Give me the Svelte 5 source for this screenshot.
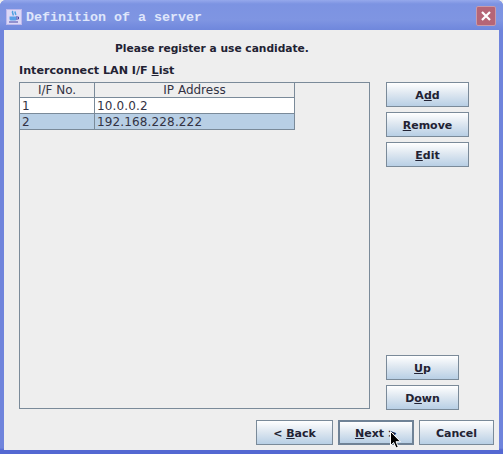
<script>
  const rows = [
    { no: '1', ip: '10.0.0.2', selected: false },
    { no: '2', ip: '192.168.228.222', selected: true }
  ];
</script>

<div class="window">
  <header class="titlebar">
    <svg class="app-icon" width="16" height="16" viewBox="0 0 16 16">
      <rect x="0.5" y="0.5" width="15" height="15" fill="#dcd8f6" stroke="#bdb8ec"/>
      <path d="M7 2c-2 1.500 1 2.500 0 4.500M9.500 2.500c-1.500 1.500 1 2 0 3.500" fill="none" stroke="#4aa0e0" stroke-width="1.500"/>
      <path d="M3.500 7.500h7v2.500q0 1.500-1.500 1.500H5q-1.500 0-1.500-1.500z" fill="#5aa0e8"/>
      <path d="M3 13h9M10 8h2.500v2H10" fill="none" stroke="#4848a8" stroke-width="1"/>
    </svg>
    <span class="title">Definition of a server</span>
    <span class="close"><svg width="12" height="12" viewBox="0 0 12 12"><path d="M2 2l8 8M10 2l-8 8" stroke="#fff" stroke-width="2.200"/></svg></span>
  </header>

  <main class="content">
    <p class="message">Please register a use candidate.</p>
    <div class="body">
      <section class="list-col">
        <div class="list-label">Interconnect LAN I/F <u>L</u>ist</div>
        <div class="scroll">
          <div class="tbl">
            <div class="row head">
              <div class="c1">I/F No.</div>
              <div class="c2">IP Address</div>
            </div>
            {#each rows as r}
              <div class="row" class:selected={r.selected}>
                <div class="c1">{r.no}</div>
                <div class="c2">{r.ip}</div>
              </div>
            {/each}
          </div>
        </div>
      </section>
      <aside class="side">
        <div class="group">
          <button class="wide">A<u>d</u>d</button>
          <button class="wide"><u>R</u>emove</button>
          <button class="wide"><u>E</u>dit</button>
        </div>
        <div class="group">
          <button class="narrow"><u>U</u>p</button>
          <button class="narrow">D<u>o</u>wn</button>
        </div>
      </aside>
    </div>
    <footer class="nav">
      <button class="back">&lt; <u>B</u>ack</button>
      <button class="next"><u>N</u>ext &gt;</button>
      <button class="cancel">Cancel</button>
    </footer>
  </main>

  <svg class="cursor" width="12" height="19" viewBox="0 0 12 19">
    <path d="M0.500 0.500v14l3.200-3 2.300 5.500 2.300-1-2.300-5.300h4.500z" fill="#000" stroke="#fff" stroke-width="1"/>
  </svg>
</div>

<style>
  :global(body) { margin: 0; background: #eeeeee; }
  .window {
    position: relative;
    width: 503px;
    height: 454px;
    box-sizing: border-box;
    display: flex;
    flex-direction: column;
    background: linear-gradient(#6f84dc 0, #6f84dc 448px, #5468d2 450px, #5468d2 100%);
    border-radius: 6px 6px 0 0;
    overflow: hidden;
    font-family: "DejaVu Sans", sans-serif;
    color: #222233;
  }
  .titlebar {
    height: 30px;
    flex: none;
    display: flex;
    align-items: center;
    padding: 0 6px 0 6px;
    background: linear-gradient(#95a8ec 0, #7c93e2 4px, #7f95e2 20px, #6f87dc 100%);
  }
  .app-icon { flex: none; margin-top: 3px; }
  .title {
    margin-left: 4px;
    margin-top: 5px;
    font: bold 13.330px "Liberation Mono", monospace;
    color: #dfe6fb;
    flex: 1;
  }
  .close {
    width: 20px;
    height: 20px;
    box-sizing: border-box;
    margin-top: 2px;
    margin-right: 1px;
    display: flex;
    align-items: center;
    justify-content: center;
    background: #b56576;
    border: 1px solid #c99aa8;
    border-radius: 2px;
  }
  .content {
    flex: 1;
    margin: 0 4px 4px 4px;
    background: #eeeeee;
    padding: 0 5px 5px 15px;
    display: flex;
    flex-direction: column;
    min-height: 0;
  }
  .message {
    margin: 11px 0 0 0;
    padding-left: 96px;
    font-size: 10.670px;
    line-height: 15px;
    font-weight: bold;
    white-space: nowrap;
    height: 15px;
  }
  .body {
    display: flex;
    flex: 1;
    margin-top: 6px;
    min-height: 0;
  }
  .list-col {
    width: 351px;
    display: flex;
    flex-direction: column;
  }
  .list-label {
    font-size: 11.150px;
    font-weight: bold;
    line-height: 17px;
    height: 15px;
    margin-bottom: 5px;
    white-space: nowrap;
  }
  .scroll {
    height: 327px;
    box-sizing: border-box;
    border: 1px solid #7a8a99;
    background: #eeeeee;
  }
  .tbl { width: 275px; }
  .row {
    display: grid;
    grid-template-columns: 75px 200px;
    height: 16px;
    box-sizing: border-box;
    background: #ffffff;
    border-bottom: 1px solid #7a8a99;
    font-size: 12px;
    line-height: 17px;
    letter-spacing: 0.140px;
    color: #333344;
  }
  .row .c1, .row .c2 {
    padding-left: 2px;
    box-sizing: border-box;
    overflow: hidden;
    white-space: nowrap;
  }
  .row .c1 { border-right: 1px solid #7a8a99; }
  .row .c2 { border-right: 1px solid #7a8a99; }
  .row.head {
    height: 15px;
    background: #eeeeee;
    line-height: 15px;
    letter-spacing: 0;
  }
  .row.head .c1, .row.head .c2 { text-align: center; padding-left: 0; }
  .row.selected { background: #b8cfe5; }
  .side {
    flex: 1;
    margin-left: 16px;
    margin-top: 20px;
    display: flex;
    flex-direction: column;
    justify-content: space-between;
    padding-bottom: 0;
  }
  .group { display: flex; flex-direction: column; gap: 5px; }
  button {
    height: 25px;
    box-sizing: border-box;
    padding: 2px 0 0;
    border: 1px solid #7a8a99;
    border-radius: 0;
    background: linear-gradient(#ffffff 0, #dfe8f1 45%, #b8cfe5 100%);
    font-family: "DejaVu Sans", sans-serif;
    font-size: 11px;
    font-weight: bold;
    color: #222233;
    white-space: nowrap;
  }
  .wide { width: 83px; }
  .narrow { width: 73px; }
  .nav {
    display: flex;
    gap: 5px;
    justify-content: flex-end;
    margin-top: 10px;
  }
  .back { width: 77px; }
  .next { width: 76px; border: 2px solid #6f8296; }
  .cancel { width: 75px; }
  .cursor {
    position: absolute;
    left: 390px;
    top: 431px;
  }
</style>
